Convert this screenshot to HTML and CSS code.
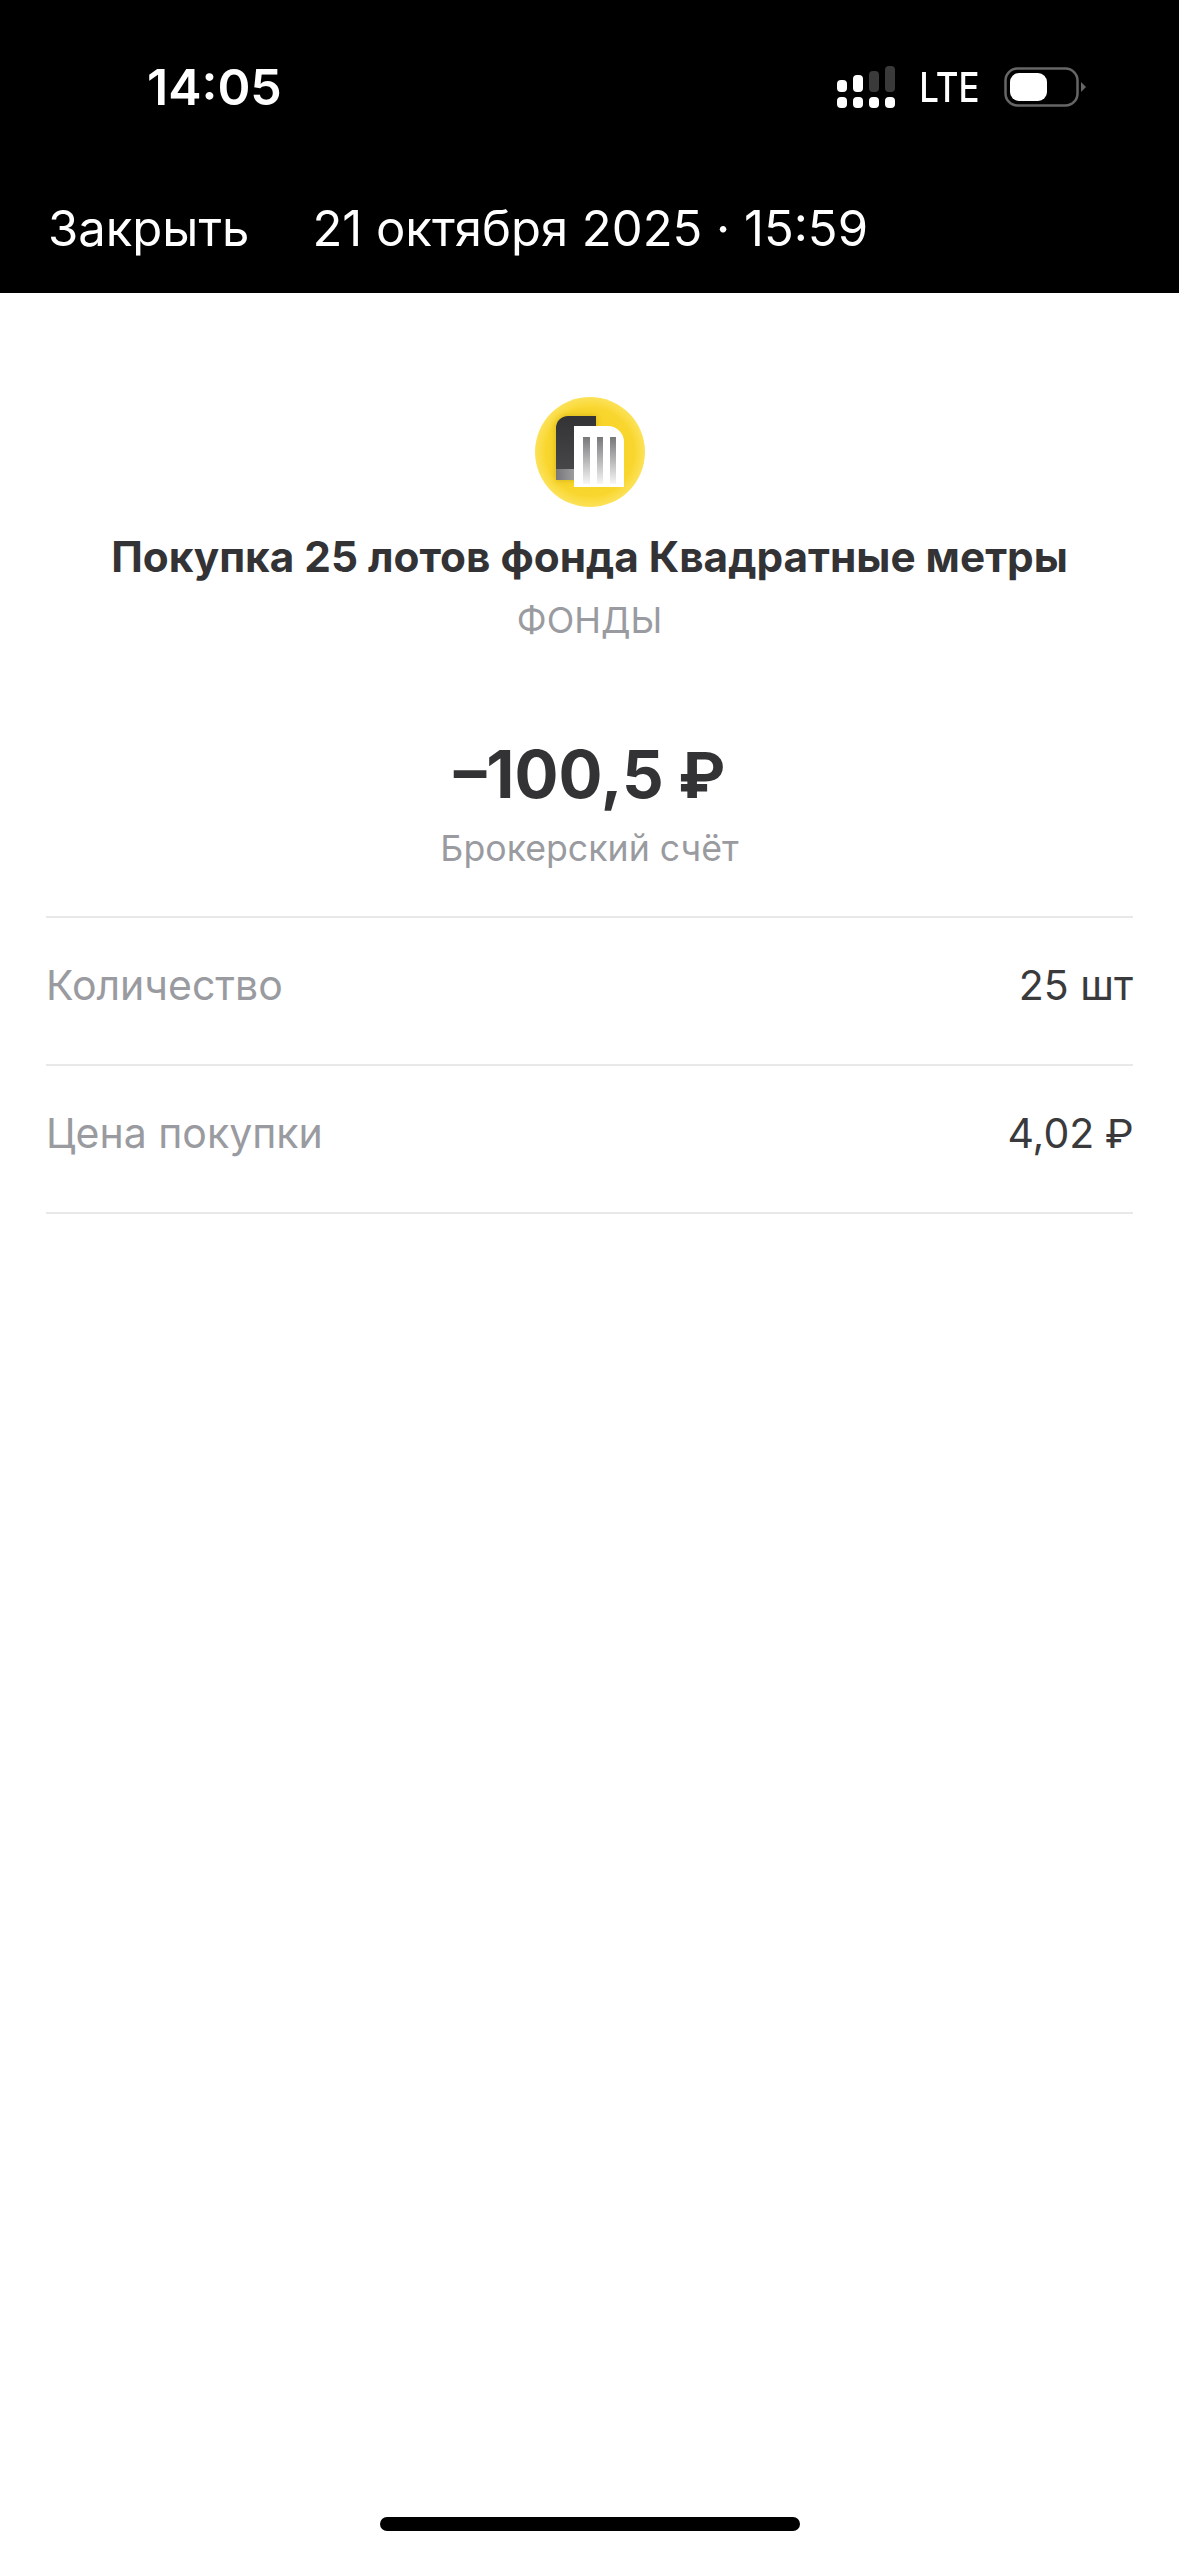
FILE: index.html
```html
<!DOCTYPE html>
<html lang="ru">
<head>
  <meta charset="UTF-8">
  <title>Покупка</title>
  <link rel="stylesheet" href="styles.css">
</head>
<body>
  <header class="top">
    <div class="status">
      <span class="clock">14:05</span>
      <div class="status-right">
        <svg class="signal" width="58" height="42" viewBox="0 0 58 42">
          <g fill="#fff">
            <rect x="0" y="14" width="10" height="12" rx="4"/>
            <rect x="16" y="9" width="10" height="17" rx="4"/>
            <rect x="0" y="31" width="10" height="11" rx="4"/>
            <rect x="16" y="31" width="10" height="11" rx="4"/>
            <rect x="32" y="31" width="10" height="11" rx="4"/>
            <rect x="48" y="31" width="10" height="11" rx="4"/>
          </g>
          <g fill="#3a3a3a">
            <rect x="32" y="5" width="10" height="21" rx="4"/>
            <rect x="48" y="0" width="10" height="26" rx="4"/>
          </g>
        </svg>
        <span class="net">LTE</span>
        <svg class="battery" width="82" height="40" viewBox="0 0 82 40">
          <rect x="1.5" y="1.5" width="72" height="37" rx="12" fill="none" stroke="#666" stroke-width="2.5"/>
          <rect x="6" y="6" width="37" height="28" rx="9" fill="#fff"/>
          <path d="M77 15l5 5-5 5z" fill="#666"/>
        </svg>
      </div>
    </div>
    <nav class="nav">
      <span class="close">Закрыть</span>
      <span class="date">21 октября 2025 · 15:59</span>
    </nav>
  </header>

  <main class="content">
    <svg class="logo" width="112" height="112" viewBox="0 0 112 112">
      <defs>
        <radialGradient id="coin" cx="0.5" cy="0.5" r="0.5">
          <stop offset="0" stop-color="#f8d21f"/>
          <stop offset="0.8" stop-color="#f9d62e"/>
          <stop offset="1" stop-color="#fce25a"/>
        </radialGradient>
        <linearGradient id="dark" x1="0" y1="0" x2="0" y2="1">
          <stop offset="0" stop-color="#333335"/>
          <stop offset="1" stop-color="#4a4a4c"/>
        </linearGradient>
        <linearGradient id="bar" x1="0" y1="0" x2="0" y2="1">
          <stop offset="0" stop-color="#77777a"/>
          <stop offset="1" stop-color="#f6f6f6"/>
        </linearGradient>
        <linearGradient id="foot" x1="0" y1="0" x2="1" y2="0">
          <stop offset="0" stop-color="#77777a"/>
          <stop offset="1" stop-color="#c9c9c9"/>
        </linearGradient>
        <filter id="soft" x="-30%" y="-30%" width="160%" height="160%">
          <feGaussianBlur stdDeviation="3"/>
        </filter>
      </defs>
      <circle cx="56" cy="56" r="55" fill="url(#coin)"/>
      <path d="M22 32a12 12 0 0 1 12-12h28v64H22z" fill="#a88a10" opacity="0.5" filter="url(#soft)"/>
      <path d="M22 32a12 12 0 0 1 12-12h28v64H22z" fill="url(#dark)"/>
      <rect x="22" y="73" width="40" height="11" fill="url(#foot)"/>
      <path d="M40 30h34a16 16 0 0 1 16 16v45H40z" fill="#fff"/>
      <rect x="49" y="41" width="7" height="47" fill="url(#bar)"/>
      <rect x="63" y="41" width="6" height="47" fill="url(#bar)"/>
      <rect x="76" y="41" width="6" height="47" fill="url(#bar)"/>
    </svg>
    <h1 class="title">Покупка 25 лотов фонда Квадратные метры</h1>
    <div class="category">ФОНДЫ</div>
    <div class="amount">–100,5 <span class="rub">₽</span></div>
    <div class="account">Брокерский счёт</div>

    <div class="rows">
      <div class="row">
        <span class="row-label">Количество</span>
        <span class="row-value">25 шт</span>
      </div>
      <div class="row">
        <span class="row-label">Цена покупки</span>
        <span class="row-value">4,02 <span class="rub">₽</span></span>
      </div>
    </div>
  </main>

  <div class="home-bar"></div>
</body>
</html>
```

FILE: styles.css
```css
html, body {
  margin: 0;
  padding: 0;
  height: 100%;
}

body {
  display: flex;
  flex-direction: column;
  background-color: #fff;
  font-family: Inter, "Noto Sans", sans-serif;
  color: #333335;
}

.top {
  height: 293px;
  background-color: #000;
  color: #fff;
  display: flex;
  flex-direction: column;
}

.status {
  height: 174px;
  display: flex;
  justify-content: space-between;
  align-items: center;
  padding: 0 93px 0 147px;
}

.clock {
  font-size: 50px;
  font-weight: 600;
}

.status-right {
  display: flex;
  align-items: center;
  gap: 24px;
}

.signal {
  display: block;
}

.net {
  font-size: 41px;
  font-weight: 500;
  margin: 0 -5px;
  transform: scaleX(0.85);
}

.battery {
  display: block;
}

.nav {
  display: flex;
  align-items: center;
  gap: 63px;
  padding: 0 48px;
  height: 108px;
  font-size: 49px;
}

.content {
  flex: 1;
  display: flex;
  flex-direction: column;
  align-items: center;
  padding: 103px 46px 0;
}

.logo {
  display: block;
}

.title {
  margin: 24px 0 0;
  font-size: 42.3px;
  line-height: 50px;
  font-weight: 700;
}

.category {
  margin-top: 14px;
  font-size: 36px;
  line-height: 48px;
  color: #9a9ba0;
}

.amount {
  margin-top: 89px;
  font-size: 65.3px;
  line-height: 84px;
  font-weight: 700;
}

.rub {
  font-family: Roboto, sans-serif;
}

.account {
  margin-top: 8px;
  font-size: 35.7px;
  line-height: 44px;
  color: #9a9ba0;
}

.rows {
  align-self: stretch;
  margin-top: 46px;
  border-top: 2px solid #e8e8e8;
}

.row {
  padding-bottom: 12px;
  box-sizing: border-box;
  height: 148px;
  display: flex;
  justify-content: space-between;
  align-items: center;
  border-bottom: 2px solid #e8e8e8;
  font-size: 41px;
}

.row-label {
  color: #9a9ba0;
}

.row-value {
  color: #3a3a3c;
}

.home-bar {
  width: 420px;
  height: 14px;
  margin: 0 auto 25px;
  border-radius: 7px;
  background-color: #000;
}
```
